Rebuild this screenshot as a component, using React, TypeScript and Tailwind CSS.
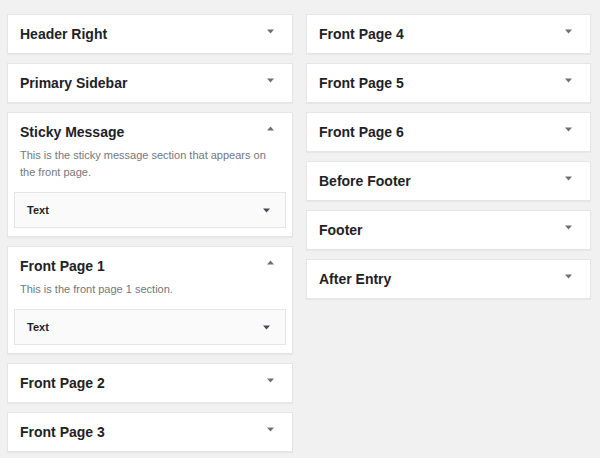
import React from "react";

interface Area {
  title: string;
  description?: string;
  widgets?: string[];
}

const leftAreas: Area[] = [
  { title: "Header Right" },
  { title: "Primary Sidebar" },
  {
    title: "Sticky Message",
    description: "This is the sticky message section that appears on the front page.",
    widgets: ["Text"],
  },
  {
    title: "Front Page 1",
    description: "This is the front page 1 section.",
    widgets: ["Text"],
  },
  { title: "Front Page 2" },
  { title: "Front Page 3" },
];

const rightAreas: Area[] = [
  { title: "Front Page 4" },
  { title: "Front Page 5" },
  { title: "Front Page 6" },
  { title: "Before Footer" },
  { title: "Footer" },
  { title: "After Entry" },
];

const Arrow: React.FC<{ up?: boolean; color: string }> = ({ up, color }) => (
  <svg width="7" height="5" viewBox="0 0 7 5" className="block">
    {up ? (
      <polygon points="0,4.5 7,4.5 3.5,0.5" fill={color} />
    ) : (
      <polygon points="0,0.5 7,0.5 3.5,4.5" fill={color} />
    )}
  </svg>
);

const WidgetArea: React.FC<{ area: Area }> = ({ area }) => {
  const open = !!area.widgets;
  return (
    <div className="bg-white border border-[#e5e5e5] shadow-[0_1px_1px_rgba(0,0,0,0.04)]">
      <div className="h-[38px] flex items-center justify-between pl-3 pr-[18px]">
        <h2 className="text-[14px] font-bold text-[#1d2227] leading-none">
          {area.title}
        </h2>
        <div className={open ? "-mt-[7px]" : "-mt-[6px]"}>
          <Arrow up={open} color="#6c7075" />
        </div>
      </div>
      {open && (
        <div className="px-[6px] pb-2">
          <p className="-mt-[4px] px-[6px] text-[11px] leading-[17px] text-[#72777c]">
            {area.description}
          </p>
          <div className="mt-[11px] flex flex-col gap-2">
            {area.widgets!.map((w) => (
              <div
                key={w}
                className="h-[36px] bg-[#fafafa] border border-[#e5e5e5] flex items-center justify-between pl-3 pr-[15px]"
              >
                <h3 className="text-[11px] font-bold text-[#1d2227] leading-none">
                  {w}
                </h3>
                <Arrow color="#464b50" />
              </div>
            ))}
          </div>
        </div>
      )}
    </div>
  );
};

export default function App() {
  return (
    <div
      className="w-[600px] h-[458px] overflow-hidden bg-[#f1f1f1] pt-[14px] pl-[7px] flex gap-[13px] items-start"
      style={{ fontFamily: '"Liberation Sans", Arial, sans-serif' }}
    >
      <div className="w-[286px] flex flex-col gap-[9px]">
        {leftAreas.map((a) => (
          <WidgetArea key={a.title} area={a} />
        ))}
      </div>
      <div className="w-[285px] flex flex-col gap-[9px]">
        {rightAreas.map((a) => (
          <WidgetArea key={a.title} area={a} />
        ))}
      </div>
    </div>
  );
}
